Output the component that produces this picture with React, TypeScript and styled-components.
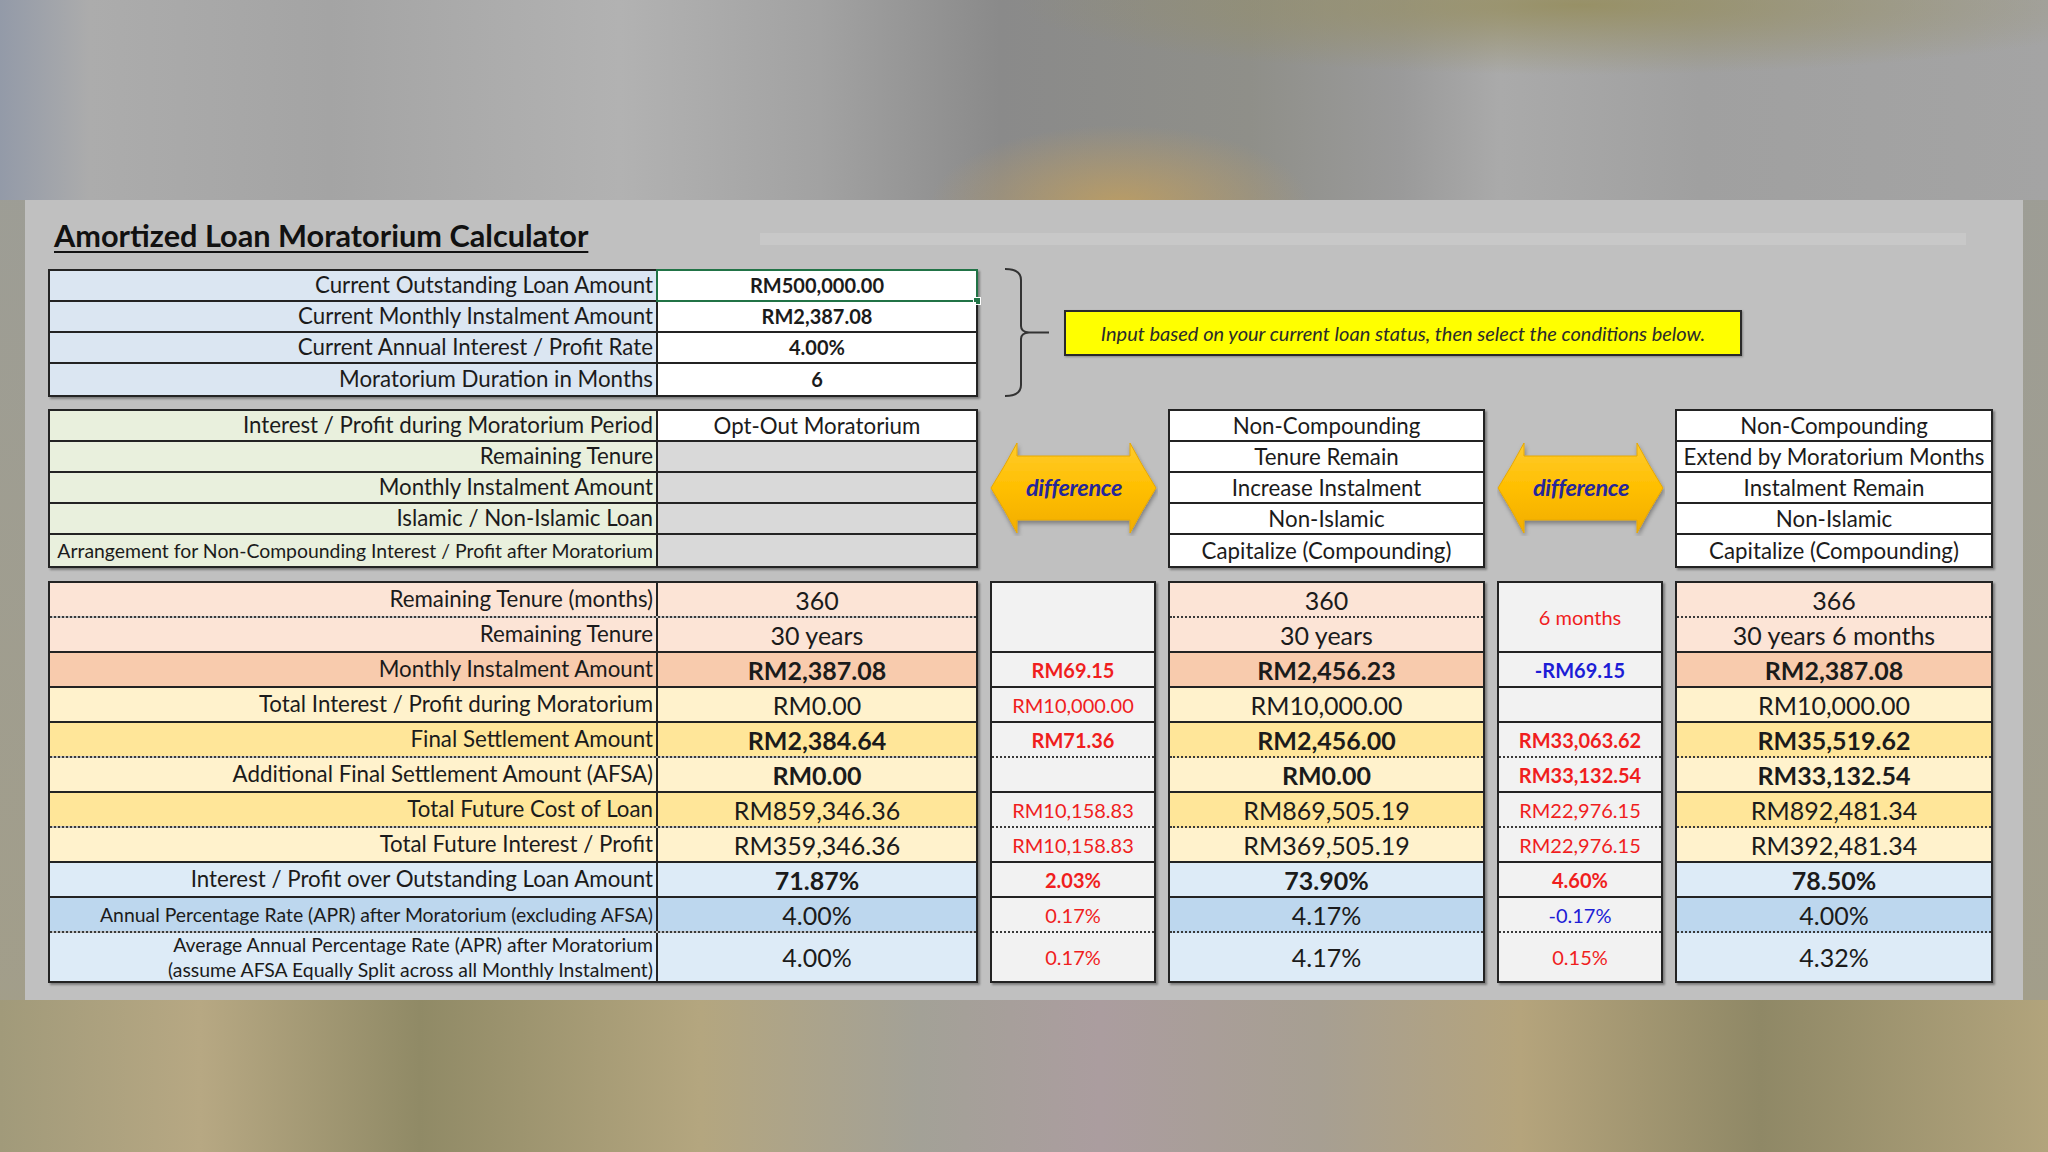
import React from 'react';
import styled, { createGlobalStyle } from 'styled-components';

type Sep = 'solid' | 'dotted' | 'none';

const C = {
  ink: '#1b1b1b',
  line: '#232323',
  dot: '#3a3a3a',
  inBlue: '#dbe6f2',
  inGreen: '#e9f0dd',
  grayCell: '#d9d9d9',
  peach: '#fce4d6',
  orange: '#f8cbad',
  cream: '#fff2cc',
  gold: '#ffe699',
  sky: '#ddebf7',
  blue: '#bdd7ee',
  diff: '#f2f2f2',
  red: '#f01e1e',
  navy: '#1d1dd6',
};

const GlobalStyle = createGlobalStyle`
  html, body {
    margin: 0;
    padding: 0;
  }
  body {
    font-family: Lato, "Open Sans", "Liberation Sans", sans-serif;
    color: ${C.ink};
  }
`;

const Page = styled.div`
  width: 2048px;
  height: 1152px;
  box-sizing: border-box;
  padding: 200px 25px 0 25px;
  overflow: hidden;
  background:
    radial-gradient(ellipse 190px 80px at 1120px 205px, rgba(190, 158, 98, 0.9), rgba(190, 158, 98, 0) 100%),
    radial-gradient(ellipse 560px 70px at 1580px 5px, rgba(150, 142, 95, 0.9), rgba(150, 142, 95, 0) 100%),
    linear-gradient(90deg, #939aa8 0px, #acacac 90px, #a4a4a4 330px, #b2b2b2 620px, #a2a2a2 820px, #8a8a8a 1000px, #8f8f89 1250px, #9a9a9a 1400px, #aaaaaa 1500px, #a0a0a0 1700px, #a4a4a4 2048px) top / 100% 200px no-repeat,
    linear-gradient(90deg, #a19a7a 0px, #b7a883 200px, #908a66 420px, #b4a67f 700px, #a3a197 920px, #ab9d9f 1100px, #a79f92 1320px, #b5a47c 1520px, #8f8866 1760px, #b2a47c 2048px) bottom / 100% 152px no-repeat,
    linear-gradient(180deg, #9c9d98 0%, #a39e88 100%);
`;

const Panel = styled.div`
  width: 1998px;
  height: 800px;
  box-sizing: border-box;
  background: #c0c0c0;
  padding: 17px 0 0 23px;
`;

const TitleRow = styled.div`
  display: flex;
  align-items: center;
  height: 38px;
`;

const Title = styled.h1`
  margin: 0 0 0 6px;
  font-size: 30.7px;
  font-weight: 700;
  line-height: 38px;
  text-decoration: underline;
  text-decoration-thickness: 2px;
  text-underline-offset: 4px;
  color: #111;
  white-space: nowrap;
`;

const TitleStrip = styled.div`
  flex: 1;
  height: 12px;
  margin: 6px 57px 0 172px;
  background: #c8c8c8;
`;

const InputSection = styled.div`
  display: flex;
  align-items: center;
  margin-top: 12px;
`;

const Box = styled.div<{ $w?: number }>`
  box-sizing: border-box;
  ${p => (p.$w ? `width: ${p.$w}px;` : '')}
  border: 2px solid ${C.line};
  box-shadow: 2px 2px 2px rgba(0, 0, 0, 0.35);
  display: flex;
  flex-direction: column;
`;

const Row = styled.div<{ $h: number; $sep: Sep }>`
  box-sizing: border-box;
  display: grid;
  grid-template-columns: 608px 1fr;
  height: ${p => p.$h}px;
  border-bottom: ${p =>
    p.$sep === 'solid' ? `2px solid ${C.line}` : p.$sep === 'dotted' ? `2px dotted ${C.dot}` : 'none'};
`;

const Label = styled.div<{ $bg: string; $size?: number }>`
  display: flex;
  align-items: center;
  justify-content: flex-end;
  padding-right: 3px;
  background: ${p => p.$bg};
  border-right: 2px solid ${C.line};
  font-size: ${p => p.$size ?? 22.3}px;
  line-height: 1.3;
  text-align: right;
  white-space: pre-line;
  overflow: hidden;
`;

const Value = styled.div<{ $bg: string; $size?: number; $bold?: boolean; $selected?: boolean }>`
  position: relative;
  display: flex;
  align-items: center;
  justify-content: center;
  background: ${p => p.$bg};
  font-size: ${p => p.$size ?? 22.3}px;
  font-weight: ${p => (p.$bold ? 700 : 400)};
  white-space: nowrap;
  ${p =>
    p.$selected
      ? `
    outline: 2px solid #217346;
    outline-offset: 0px;
    &::after {
      content: '';
      position: absolute;
      right: -5px;
      bottom: -5px;
      width: 6px;
      height: 6px;
      background: #217346;
      border: 1px solid #fff;
    }
  `
      : ''}
`;

const Cell = styled.div<{ $h: number; $sep: Sep; $bg: string; $size?: number; $bold?: boolean; $color?: string }>`
  box-sizing: border-box;
  height: ${p => p.$h}px;
  display: flex;
  align-items: center;
  justify-content: center;
  background: ${p => p.$bg};
  border-bottom: ${p =>
    p.$sep === 'solid' ? `2px solid ${C.line}` : p.$sep === 'dotted' ? `2px dotted ${C.dot}` : 'none'};
  font-size: ${p => p.$size ?? 25}px;
  font-weight: ${p => (p.$bold ? 700 : 400)};
  color: ${p => p.$color ?? C.ink};
  white-space: nowrap;
`;

const Brace = styled.svg`
  width: 50px;
  height: 131px;
  margin-left: 24px;
  flex: none;
`;

const Note = styled.div`
  box-sizing: border-box;
  width: 678px;
  height: 46px;
  margin-left: 12px;
  display: flex;
  align-items: center;
  justify-content: center;
  background: #ffff00;
  border: 2px solid #2a2a2a;
  box-shadow: 1px 1px 2px rgba(0, 0, 0, 0.3);
  font-size: 20px;
  font-style: italic;
  color: #2b2b2b;
`;

const Grid = styled.div<{ $top: number }>`
  display: grid;
  grid-template-columns: 930px 166px 317px 166px 318px;
  column-gap: 12px;
  margin-top: ${p => p.$top}px;
`;

const ArrowWrap = styled.div`
  align-self: center;
  display: grid;
  width: 168px;
  height: 94px;
  & > * {
    grid-area: 1 / 1;
  }
`;

const ArrowText = styled.span`
  align-self: center;
  justify-self: center;
  margin-top: -4px;
  font-size: 23.5px;
  font-weight: 700;
  font-style: italic;
  color: #26269a;
  letter-spacing: -0.3px;
`;

function Arrow({ id }: { id: string }) {
  return (
    <ArrowWrap>
      <svg width="168" height="94" viewBox="0 0 168 94">
        <defs>
          <linearGradient id={id} x1="0" y1="0" x2="0" y2="1">
            <stop offset="0" stopColor="#ffcb2e" />
            <stop offset="0.5" stopColor="#ffbf00" />
            <stop offset="1" stopColor="#f2ad00" />
          </linearGradient>
          <filter id={`${id}s`} x="-10%" y="-10%" width="120%" height="130%">
            <feDropShadow dx="1" dy="3" stdDeviation="2" floodColor="#000" floodOpacity="0.35" />
          </filter>
        </defs>
        <path
          d="M1 46 Q16 22 27 1 L27 14 L140 14 L140 1 Q151 22 166 46 Q151 70 140 91 L140 78 L27 78 L27 91 Q16 70 1 46 Z"
          fill={`url(#${id})`}
          stroke="#e8a800"
          strokeWidth="1"
          filter={`url(#${id}s)`}
        />
      </svg>
      <ArrowText>difference</ArrowText>
    </ArrowWrap>
  );
}

const inputs = [
  ['Current Outstanding Loan Amount', 'RM500,000.00'],
  ['Current Monthly Instalment Amount', 'RM2,387.08'],
  ['Current Annual Interest / Profit Rate', '4.00%'],
  ['Moratorium Duration in Months', '6'],
];

const optionLabels = [
  'Interest / Profit during Moratorium Period',
  'Remaining Tenure',
  'Monthly Instalment Amount',
  'Islamic / Non-Islamic Loan',
  'Arrangement for Non-Compounding Interest / Profit after Moratorium',
];

const optionB = ['Non-Compounding', 'Tenure Remain', 'Increase Instalment', 'Non-Islamic', 'Capitalize (Compounding)'];
const optionC = ['Non-Compounding', 'Extend by Moratorium Months', 'Instalment Remain', 'Non-Islamic', 'Capitalize (Compounding)'];

type ResultRow = { label: string; bg: string; sep: Sep; h: number; bold?: boolean; small?: boolean };

const resultRows: ResultRow[] = [
  { label: 'Remaining Tenure (months)', bg: C.peach, sep: 'dotted', h: 35 },
  { label: 'Remaining Tenure', bg: C.peach, sep: 'solid', h: 35 },
  { label: 'Monthly Instalment Amount', bg: C.orange, sep: 'solid', h: 35, bold: true },
  { label: 'Total Interest / Profit during Moratorium', bg: C.cream, sep: 'solid', h: 35 },
  { label: 'Final Settlement Amount', bg: C.gold, sep: 'dotted', h: 35, bold: true },
  { label: 'Additional Final Settlement Amount (AFSA)', bg: C.cream, sep: 'solid', h: 35, bold: true },
  { label: 'Total Future Cost of Loan', bg: C.gold, sep: 'dotted', h: 35 },
  { label: 'Total Future Interest / Profit', bg: C.cream, sep: 'solid', h: 35 },
  { label: 'Interest / Profit over Outstanding Loan Amount', bg: C.sky, sep: 'solid', h: 35, bold: true },
  {
    label: 'Annual Percentage Rate (APR) after Moratorium (excluding AFSA)',
    bg: C.blue,
    sep: 'dotted',
    h: 35,
    small: true,
  },
  {
    label: 'Average Annual Percentage Rate (APR) after Moratorium\n(assume AFSA Equally Split across all Monthly Instalment)',
    bg: C.sky,
    sep: 'none',
    h: 48,
    small: true,
  },
];

const scenarioA = ['360', '30 years', 'RM2,387.08', 'RM0.00', 'RM2,384.64', 'RM0.00', 'RM859,346.36', 'RM359,346.36', '71.87%', '4.00%', '4.00%'];
const scenarioB = ['360', '30 years', 'RM2,456.23', 'RM10,000.00', 'RM2,456.00', 'RM0.00', 'RM869,505.19', 'RM369,505.19', '73.90%', '4.17%', '4.17%'];
const scenarioC = ['366', '30 years 6 months', 'RM2,387.08', 'RM10,000.00', 'RM35,519.62', 'RM33,132.54', 'RM892,481.34', 'RM392,481.34', '78.50%', '4.00%', '4.32%'];

type DiffCell = { text: string; bold?: boolean; blue?: boolean };

// first entry covers the two merged tenure rows
const diffAB: DiffCell[] = [
  { text: '' },
  { text: 'RM69.15', bold: true },
  { text: 'RM10,000.00' },
  { text: 'RM71.36', bold: true },
  { text: '' },
  { text: 'RM10,158.83' },
  { text: 'RM10,158.83' },
  { text: '2.03%', bold: true },
  { text: '0.17%' },
  { text: '0.17%' },
];

const diffBC: DiffCell[] = [
  { text: '6 months' },
  { text: '-RM69.15', bold: true, blue: true },
  { text: '' },
  { text: 'RM33,063.62', bold: true },
  { text: 'RM33,132.54', bold: true },
  { text: 'RM22,976.15' },
  { text: 'RM22,976.15' },
  { text: '4.60%', bold: true },
  { text: '-0.17%', blue: true },
  { text: '0.15%' },
];

function ScenarioColumn({ values }: { values: string[] }) {
  return (
    <Box>
      {resultRows.map((r, i) => (
        <Cell key={i} $h={r.h} $sep={r.sep} $bg={r.bg} $bold={r.bold}>
          {values[i]}
        </Cell>
      ))}
    </Box>
  );
}

function DiffColumn({ cells }: { cells: DiffCell[] }) {
  return (
    <Box>
      {cells.map((c, i) => {
        const row = resultRows[i === 0 ? 1 : i + 1];
        const h = i === 0 ? resultRows[0].h + resultRows[1].h : row.h;
        return (
          <Cell
            key={i}
            $h={h}
            $sep={row.sep}
            $bg={C.diff}
            $size={20}
            $bold={c.bold}
            $color={c.blue ? C.navy : C.red}
          >
            {c.text}
          </Cell>
        );
      })}
    </Box>
  );
}

function OptionColumn({ items }: { items: string[] }) {
  return (
    <Box>
      {items.map((t, i) => (
        <Cell key={i} $h={31} $sep={i < items.length - 1 ? 'solid' : 'none'} $bg="#fff" $size={22.3}>
          {t}
        </Cell>
      ))}
    </Box>
  );
}

export default function App() {
  return (
    <Page>
      <GlobalStyle />
      <Panel>
        <TitleRow>
          <Title>Amortized Loan Moratorium Calculator</Title>
          <TitleStrip />
        </TitleRow>

        <InputSection>
          <Box $w={930}>
            {inputs.map(([label, value], i) => (
              <Row key={label} $h={31} $sep={i < inputs.length - 1 ? 'solid' : 'none'}>
                <Label $bg={C.inBlue}>{label}</Label>
                <Value $bg="#fff" $bold $size={20} $selected={i === 0}>
                  {value}
                </Value>
              </Row>
            ))}
          </Box>
          <Brace viewBox="0 0 50 131">
            <path
              d="M3 2 Q19 2 19 13 L19 59 Q19 65 27 65.5 L47 65.5 M27 65.5 Q19 66 19 72 L19 118 Q19 129 3 129"
              fill="none"
              stroke="#333"
              strokeWidth="2"
            />
          </Brace>
          <Note>Input based on your current loan status, then select the conditions below.</Note>
        </InputSection>

        <Grid $top={11}>
          <Box>
            {optionLabels.map((label, i) => (
              <Row key={label} $h={31} $sep={i < optionLabels.length - 1 ? 'solid' : 'none'}>
                <Label $bg={C.inGreen} $size={i === 4 ? 19.4 : 22.3}>
                  {label}
                </Label>
                <Value $bg={i === 0 ? '#fff' : C.grayCell}>{i === 0 ? 'Opt-Out Moratorium' : ''}</Value>
              </Row>
            ))}
          </Box>
          <Arrow id="arrowA" />
          <OptionColumn items={optionB} />
          <Arrow id="arrowB" />
          <OptionColumn items={optionC} />
        </Grid>

        <Grid $top={13}>
          <Box>
            {resultRows.map((r, i) => (
              <Row key={i} $h={r.h} $sep={r.sep}>
                <Label $bg={r.bg} $size={r.small ? 19.4 : 22.3}>
                  {r.label}
                </Label>
                <Value $bg={r.bg} $size={25} $bold={r.bold}>
                  {scenarioA[i]}
                </Value>
              </Row>
            ))}
          </Box>
          <DiffColumn cells={diffAB} />
          <ScenarioColumn values={scenarioB} />
          <DiffColumn cells={diffBC} />
          <ScenarioColumn values={scenarioC} />
        </Grid>
      </Panel>
    </Page>
  );
}
